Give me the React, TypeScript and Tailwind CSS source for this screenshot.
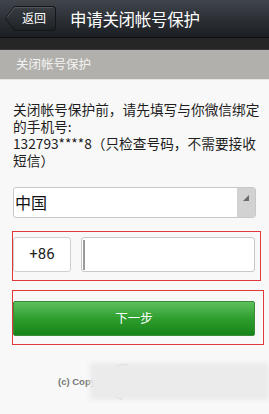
export default function App() {
  const cjk = { fontFamily: '"Noto Sans CJK SC", "Noto Sans", sans-serif' };
  return (
    <div className="w-[269px] h-[414px] overflow-hidden bg-[#f8f8f8] flex flex-col" style={cjk}>
      {/* title bar */}
      <div className="h-[37px] shrink-0 bg-gradient-to-b from-[#40454c] to-[#1b1e22] flex items-center">
        <div className="relative ml-[5px] w-[51px] h-[25px]">
          <svg width="51" height="25" viewBox="0 0 51 25" className="absolute inset-0">
            <defs>
              <linearGradient id="bb" x1="0" y1="0" x2="0" y2="1">
                <stop offset="0" stopColor="#3a3e44" />
                <stop offset="1" stopColor="#1e2124" />
              </linearGradient>
            </defs>
            <path d="M0.5 12.5 L9 1 Q10 0.5 11 0.5 H48 Q50.5 0.5 50.5 3 V22 Q50.5 24.5 48 24.5 H11 Q10 24.5 9 24 Z" fill="url(#bb)" stroke="#14161a" />
            <path d="M2 11.5 L9.5 1.6 H48" fill="none" stroke="#5a5f66" strokeWidth="0.8" />
          </svg>
          <span className="absolute left-[17px] top-[4px] text-[12px] leading-[16px] text-white">返回</span>
        </div>
        <span className="ml-[14px] text-[16.5px] leading-[20px] text-white tracking-[-0.3px]">申请关闭帐号保护</span>
      </div>
      {/* dark strip */}
      <div className="h-[13px] shrink-0 bg-[#262626] border-t border-[#0e0e0e] border-b border-b-[#3a3a3a]" />
      {/* section header */}
      <div className="h-[30px] shrink-0 bg-[#b1b0ac] border-b border-b-[#e6e6e4] flex items-center pl-[16px]">
        <span className="text-[12.5px] text-[#f4f4f2]">关闭帐号保护</span>
      </div>

      <div className="px-[13px] pt-[21px]">
        <p className="text-[13.7px] leading-[17px] text-[#1e1e1e] whitespace-nowrap">
          关闭帐号保护前，请先填写与你微信绑定
          <br />
          的手机号:
          <br />
          132793****8（只检查号码，不需要接收
          <br />
          短信）
        </p>

        {/* country select */}
        <div className="mt-[18px] h-[31px] rounded-[3px] border border-[#c8c8c8] bg-white flex overflow-hidden">
          <span className="flex-1 pl-[1px] text-[16px] leading-[29px] text-[#111]">中国</span>
          <div className="w-[18px] bg-[#d2d2d2] relative">
            <svg width="8" height="8" viewBox="0 0 8 8" className="absolute left-[5px] top-[6px]">
              <path d="M7 1 V7 H1 Z" fill="#6a6a6a" />
            </svg>
          </div>
        </div>
      </div>

      {/* phone row */}
      <div className="mt-[13px] ml-[12px] w-[249px] h-[50px] border border-[#e23a3a] pt-[5px] flex gap-[10px]">
        <div className="w-[58px] h-[35px] rounded-[3px] border border-[#cfcfcf] bg-white flex items-center justify-center text-[15px] text-[#222]" style={{ fontFamily: 'Roboto, "Noto Sans", sans-serif' }}>
          +86
        </div>
        <div className="w-[174px] h-[35px] rounded-[3px] border border-[#c8c8c8] bg-white flex items-center pl-[1px]">
          <div className="w-[2px] h-[30px] bg-[#9a9a9a]" />
        </div>
      </div>

      {/* next button */}
      <div className="mt-[9px] ml-[12px] w-[252px] h-[55px] border border-[#e23a3a] pt-[10px]">
        <div className="w-[242px] h-[35px] rounded-[2px] bg-gradient-to-b from-[#5cc05c] via-[#2e9e2e] to-[#158315] border border-[#3a8a3a] flex items-center justify-center">
          <span className="text-[12.5px] text-white">下一步</span>
        </div>
      </div>

      {/* footer */}
      <div className="relative flex-1">
        <span className="absolute left-[58px] top-[30px] text-[9.5px] font-bold text-[#7a7a7a]" style={{ fontFamily: '"Liberation Sans", Arial, sans-serif' }}>
          (c) Copy
        </span>
        <svg width="40" height="44" viewBox="0 0 40 44" className="absolute left-[100px] top-[14px]">
          <path d="M28 6 Q12 4 8 20 Q6 36 22 40" fill="none" stroke="#c8c8c8" strokeWidth="2" />
        </svg>
        <div className="absolute left-[90px] top-[18px] w-[179px] h-[37px] bg-[#ebebeb] blur-[2px]" />
      </div>
    </div>
  );
}
